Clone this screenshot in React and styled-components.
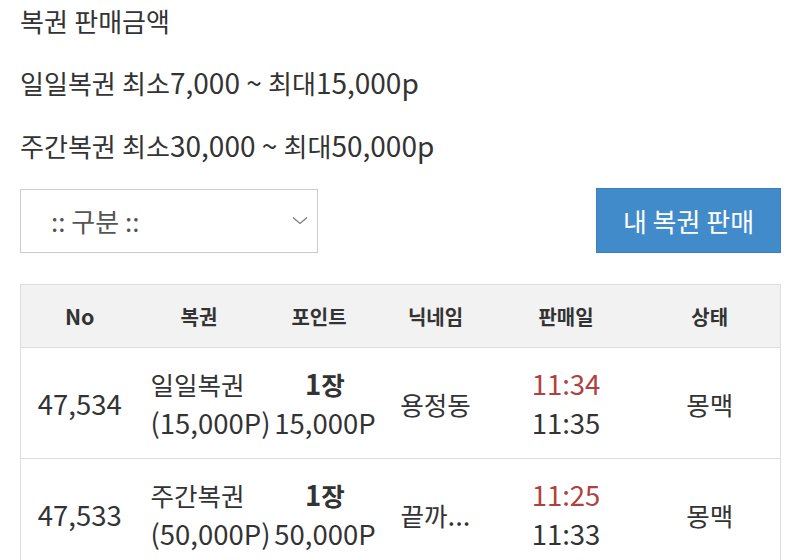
import React from "react";
import styled, { createGlobalStyle } from "styled-components";

const GlobalStyle = createGlobalStyle`
  body {
    margin: 0;
    background: #fff;
    font-family: "Noto Sans CJK KR", "Noto Sans", sans-serif;
    color: #333;
  }
`;

const Page = styled.div`
  padding: 0 20px;
`;

// hangul in the reference sits a bit smaller than the latin/digits
const Han = styled.span`
  font-size: 0.93em;
  line-height: 1;
`;

function T({ children }) {
  const parts = String(children).split(/([\uAC00-\uD7A3\u3131-\u318E]+)/);
  return parts.map((s, i) => (i % 2 ? <Han key={i}>{s}</Han> : s));
}

const Info = styled.p`
  margin: 0;
  font-size: 28px;
  line-height: 32px;
  margin-top: ${(p) => p.top}px;
`;

const Toolbar = styled.div`
  display: flex;
  justify-content: space-between;
  align-items: center;
  margin-top: 27px;
  margin-bottom: 31px;
`;

const SelectBox = styled.div`
  width: 298px;
  height: 64px;
  box-sizing: border-box;
  border: 1px solid #ccc;
  display: flex;
  align-items: center;
  justify-content: space-between;
  padding: 0 9px 0 30px;
  font-size: 26px;
  color: #555;
`;

const SellButton = styled.button`
  width: 185px;
  height: 65px;
  border: 1px solid #3a80bf;
  background: #428bca;
  color: #fff;
  font-family: inherit;
  font-size: 26px;
  padding: 0;
  margin-right: -1px;
`;

const Table = styled.table`
  width: 760px;
  border-collapse: collapse;
  table-layout: fixed;
  border-left: 1px solid #ddd;
  border-right: 1px solid #ddd;
`;

const Th = styled.th`
  height: 62px;
  background: #f2f2f2;
  border-top: 1px solid #ddd;
  border-bottom: 1px solid #ddd;
  font-size: 21.5px;
  line-height: 30px;
  font-weight: 700;
  color: #333;
  padding: 0;
`;

const Td = styled.td`
  height: 110px;
  border-bottom: 1px solid #ddd;
  text-align: ${(p) => p.align || "center"};
  padding: 0 0 0 ${(p) => p.pad || 0}px;
  font-size: 27.5px;
  line-height: 39px;
  white-space: nowrap;
`;

const Strong = styled.div`
  font-weight: 700;
`;

const Red = styled.div`
  color: #b0413e;
`;

const cols = [118, 121, 119, 114, 147, 141];
const heads = ["No", "복권", "포인트", "닉네임", "판매일", "상태"];

const rows = [
  { no: "47,534", type: "일일복권", price: "(15,000P)", point: "15,000P", nick: "용정동", from: "11:34", to: "11:35", state: "몽맥" },
  { no: "47,533", type: "주간복권", price: "(50,000P)", point: "50,000P", nick: "끝까...", from: "11:25", to: "11:33", state: "몽맥" },
];

export default function App() {
  return (
    <Page>
      <GlobalStyle />
      <Info top={4}><T>복권 판매금액</T></Info>
      <Info top={30}><T>일일복권 최소7,000 ~ 최대15,000p</T></Info>
      <Info top={31}><T>주간복권 최소30,000 ~ 최대50,000p</T></Info>
      <Toolbar>
        <SelectBox>
          <span>:: 구분 ::</span>
          <svg width="16" height="9" viewBox="0 0 16 9">
            <path d="M1 1.5 L8 7.5 L15 1.5" fill="none" stroke="#777" strokeWidth="1.1" />
          </svg>
        </SelectBox>
        <SellButton>내 복권 판매</SellButton>
      </Toolbar>
      <Table>
        <colgroup>
          {cols.map((w, i) => (
            <col key={i} style={{ width: w }} />
          ))}
        </colgroup>
        <thead>
          <tr>
            {heads.map((h) => (
              <Th key={h}><T>{h}</T></Th>
            ))}
          </tr>
        </thead>
        <tbody>
          {rows.map((r) => (
            <tr key={r.no}>
              <Td>{r.no}</Td>
              <Td align="left" pad={12}>
                <div><T>{r.type}</T></div>
                <div>{r.price}</div>
              </Td>
              <Td pad={12}>
                <Strong>1<T>장</T></Strong>
                <div>{r.point}</div>
              </Td>
              <Td><T>{r.nick}</T></Td>
              <Td>
                <Red>{r.from}</Red>
                <div>{r.to}</div>
              </Td>
              <Td><T>{r.state}</T></Td>
            </tr>
          ))}
        </tbody>
      </Table>
    </Page>
  );
}
